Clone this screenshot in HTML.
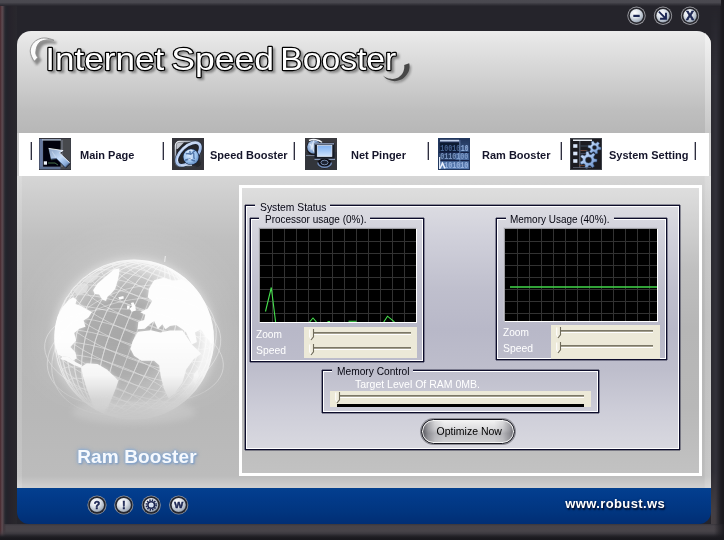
<!DOCTYPE html>
<html>
<head>
<meta charset="utf-8">
<title>Internet Speed Booster</title>
<style>
*{box-sizing:border-box;margin:0;padding:0}
html,body{width:724px;height:540px;overflow:hidden}
body{position:relative;font-family:"Liberation Sans",sans-serif;background:#25242b}
.abs{position:absolute}
i.ln{position:absolute;display:block}
#frame{left:0;top:0;width:724px;height:540px;background:#25242b}
#frameT{left:0;top:0;width:721px;height:6px;background:linear-gradient(to bottom,#4b4a51 0,#49484f 2.5px,#39383f 4px,#26252c 6px)}
#frameE{left:720px;top:0;width:4px;height:540px;background:linear-gradient(to right,#222127 0,#1b1a1f 2px,#19181d 4px)}
#frameL{left:0;top:0;width:17px;height:540px;background:linear-gradient(to right,#46262c 0,#54393f 1px,#5c4b51 2.2px,#463c42 3.5px,#272930 5px,#22232a 7px,#26232b 10px,#28262c 14px,#29282e 17px)}
#frameR{left:711px;top:6px;width:9px;height:534px;background:linear-gradient(to right,#2a2930 0,#302f36 3px,#32313a 5px,#2a2930 7px,#222127 9px);-webkit-mask-image:linear-gradient(to bottom,transparent 0,#000 70px);mask-image:linear-gradient(to bottom,transparent 0,#000 70px)}
#frameB{left:0;top:524px;width:724px;height:16px;background:linear-gradient(to right,rgba(27,26,31,0) 0,rgba(27,26,31,0) 714px,rgba(27,26,31,.55) 719px,rgba(25,24,29,.95) 724px),linear-gradient(to bottom,#39363c 0,#474349 2px,#484449 7px,#3c393f 9.5px,#252429 12px,#1b1a1f 14px,#19181d 16px)}
#frameL2{left:0;top:524px;width:6px;height:13px;background:linear-gradient(to right,#46262c 0,#54393f 1px,#5c4b51 2.2px,#463c42 3.5px,rgba(60,52,58,.5) 5px,rgba(60,52,58,0) 6px);-webkit-mask-image:linear-gradient(to bottom,#000 0,#000 6px,transparent 13px);mask-image:linear-gradient(to bottom,#000 0,#000 6px,transparent 13px)}
#frameBR{left:711px;top:470px;width:9px;height:54px;background:linear-gradient(to right,rgba(74,68,72,.85) 0,rgba(72,66,70,.8) 4px,rgba(50,47,52,.5) 7px,rgba(34,33,39,0) 9px);-webkit-mask-image:linear-gradient(to bottom,transparent 0,#000 42px);mask-image:linear-gradient(to bottom,transparent 0,#000 42px)}
#panel{left:17px;top:31px;width:694px;height:493px;border-radius:14px 14px 12px 12px;overflow:hidden;background:transparent}
#header{left:0;top:0;width:694px;height:102px;background:linear-gradient(to bottom,#ececec 0,#e4e4e4 12px,#d2d2d2 45px,#bebebe 80px,#b7b7b7 102px)}
#hdrR{left:688px;top:0;width:6px;height:102px;background:linear-gradient(to bottom,#f4f4f4 0,#dedede 50px,#c6c6c6 102px)}
#nav{left:0;top:102px;width:694px;height:43px;background:linear-gradient(to right,#cfcfcf 0,#cfcfcf 1.5px,#fff 2px,#fff 692px,#d4d4d4 692px)}
#content{left:0;top:145px;width:694px;height:312px;background:linear-gradient(to right,rgba(255,255,255,.16) 0,rgba(255,255,255,.13) 4.500px,rgba(255,255,255,0) 5.500px,rgba(255,255,255,0) 687px,rgba(255,255,255,.14) 688.500px,rgba(255,255,255,.2) 694px),linear-gradient(to bottom,#d6d6d6 0,#cdcdcd 22px,#bfbfbf 65px,#b6b6b6 140px,#b8b8b8 240px,#bcbcbc 300px,#cfcfcf 311px)}
#footer{left:0;top:457px;width:694px;height:36px;background:linear-gradient(to bottom,#03408f 0,#023b8b 8px,#01357f 24px,#012e74 36px)}
.sep{top:9px;width:2px;height:18px;background:linear-gradient(to right,#b4b4bc 0,#b4b4bc .6px,#2e2e3e .6px,#2e2e3e 1.8px,#d8d8dc 1.8px)}
.ico{top:5px;width:32px;height:32px}
.nt{top:16px;font-size:11px;font-weight:bold;color:#15152a;white-space:nowrap;line-height:13px}
#wbox{border:3px solid #fff;background:linear-gradient(to bottom,#dedede 0,#d3d3d3 30px,#c0c0c0 80px,#b6b6b6 140px,#b8b8b8 220px,#c2c2c2 285px)}
.lg{font-size:11px;line-height:12px;color:#050510;white-space:nowrap}
.graph{background-color:#000;border:1px solid;border-color:#9c9ca2 #fff #fff #9c9ca2;box-shadow:-1px -1px 0 rgba(200,200,208,.7)}
.wl{color:#fff;font-size:11px;line-height:12px;white-space:nowrap}
.beige{background:#ece9d8}
.trk{height:3px;background:linear-gradient(to bottom,#7b7766 0,#7b7766 1px,#a39f8e 1px,#a39f8e 2px,#fff 2px)}
.thumb{width:6px;height:12px}
#btn{border-radius:13px;border:1px solid #17171f;font-size:11px;line-height:23px;text-align:center;color:#000;
 box-shadow:0 0 0 1px #8e8e96,inset 0 0 0 1px #f4f4f4;
 background:linear-gradient(to right,rgba(50,50,58,.8) 0,rgba(90,90,98,.5) 6px,rgba(130,130,138,.22) 13px,rgba(255,255,255,0) 22px,rgba(255,255,255,0) 72px,rgba(130,130,138,.22) 81px,rgba(90,90,98,.5) 88px,rgba(50,50,58,.8) 94px),
 linear-gradient(to bottom,#f4f4f4 0,#dcdcde 40%,#c0c0c4 58%,#d2d2d4 100%)}
#btn span{display:inline-block;transform:scaleX(.955);position:relative;left:1px}
.lg,.wl{transform-origin:0 0}
#lgS{transform:scaleX(.938)}
#lgP{transform:scaleX(.907)}
#lgM{transform:scaleX(.905)}
#lgC{transform:scaleX(.927)}
#tC{transform:scaleX(.955)}
#zP,#zM{transform:scaleX(.92)}
#sP,#sM{transform:scaleX(.945)}
#panel{will-change:transform}
#url{font-size:13px;font-weight:bold;color:#fff;line-height:15px;letter-spacing:.38px;white-space:nowrap;text-shadow:1px 1.5px 1.5px #03102e,0 0 2px rgba(3,16,46,.6)}
#ramlbl{font-size:19px;font-weight:bold;color:#f6f9fd;line-height:22px;white-space:nowrap;letter-spacing:.12px;text-shadow:0 0 2px #8fb0d6,0 0 3px #8fb0d6,0 0 5px rgba(125,160,205,.9),1px 1px 2px rgba(105,135,180,.9)}
</style>
</head>
<body>
<div id="frame" class="abs"></div>
<div id="frameL" class="abs"></div>
<div id="frameR" class="abs"></div>
<div id="frameE" class="abs"></div>
<div id="frameB" class="abs"></div>
<div id="frameT" class="abs"></div>
<div id="frameBR" class="abs"></div>
<div id="frameL2" class="abs"></div>
<svg class="abs" id="winbtns" style="left:620px;top:0;will-change:transform" width="90" height="31" viewBox="620 0 90 31"><defs><radialGradient id="wg" cx=".38" cy=".3" r=".8"><stop offset="0" stop-color="#fdfdfe"/><stop offset=".42" stop-color="#e0e5ec"/><stop offset=".8" stop-color="#a9b3c0"/><stop offset="1" stop-color="#6f7886"/></radialGradient></defs><g transform="translate(636.5,15.7)"><circle r="9.2" fill="#9a9aa0"/><circle r="8.3" fill="#26262c"/><circle r="6.7" fill="url(#wg)"/><rect x="-3.2" y="-.9" width="6.4" height="2.2" fill="#1b2552"/></g><g transform="translate(663,15.7)"><circle r="9.2" fill="#9a9aa0"/><circle r="8.3" fill="#26262c"/><circle r="6.7" fill="url(#wg)"/><path d="M-3.4 -3.4L1.6 1.6M3 -2V3H-2" stroke="#1b2552" stroke-width="1.9" fill="none" stroke-linecap="square"/></g><g transform="translate(690,15.7)"><circle r="9.2" fill="#9a9aa0"/><circle r="8.3" fill="#26262c"/><circle r="6.7" fill="url(#wg)"/><text x="0" y="4.3" text-anchor="middle" font-family="Liberation Sans, sans-serif" font-weight="bold" font-size="12" fill="#1b2552" stroke="#1b2552" stroke-width=".6">X</text></g></svg>
<div id="panel" class="abs">
<div id="header" class="abs"></div><div id="hdrR" class="abs"></div>
<svg class="abs" id="title" style="left:0;top:0" width="694" height="102" viewBox="17 31 694 102">
<defs>
<filter id="tsh" x="-5%" y="-30%" width="110%" height="170%"><feGaussianBlur stdDeviation="1.1"/></filter>
</defs>
<g font-family="Liberation Sans, sans-serif" font-size="32">
 <g filter="url(#tsh)" fill="#666" stroke="#666" stroke-width="2.2" opacity=".7" transform="translate(2.4,2.6)">
  <text x="45.3" y="69.6" textLength="119" lengthAdjust="spacingAndGlyphs">Internet</text>
  <text x="171.2" y="69.6" textLength="102.8" lengthAdjust="spacingAndGlyphs">Speed</text>
  <text x="280.3" y="69.6" textLength="116" lengthAdjust="spacingAndGlyphs">Booster</text>
  <path d="M34.5 61.3C31 57 30 52 30.3 50C31 45 34 41 38.7 39.2C42 37.6 47 37.2 54 40.4C50 39.2 45 39.6 40.3 41.7C37.5 44 36 47.5 35.75 53.3C36 55 36.8 56.5 37.8 57.5Z"/>
 </g>
 <g fill="#000" stroke="#000" stroke-width="2.3" stroke-linejoin="round">
  <text x="45.3" y="69.6" textLength="119" lengthAdjust="spacingAndGlyphs">Internet</text>
  <text x="171.2" y="69.6" textLength="102.8" lengthAdjust="spacingAndGlyphs">Speed</text>
  <text x="280.3" y="69.6" textLength="116" lengthAdjust="spacingAndGlyphs">Booster</text>
 </g>
 <g fill="#fff">
  <text x="45.3" y="69.6" textLength="119" lengthAdjust="spacingAndGlyphs">Internet</text>
  <text x="171.2" y="69.6" textLength="102.8" lengthAdjust="spacingAndGlyphs">Speed</text>
  <text x="280.3" y="69.6" textLength="116" lengthAdjust="spacingAndGlyphs">Booster</text>
 </g>
</g>
<!-- swoosh top-left -->
<path d="M34.5 61.3C31 57 30 52 30.3 50C31 45 34 41 38.7 39.2C42 37.6 47 37.2 54 40.4C50 39.2 45 39.6 40.3 41.7C37.5 44 36 47.5 35.75 53.3C36 55 36.8 56.5 37.8 57.5Z" fill="#fbfbfb" stroke="#8c8c8c" stroke-width=".9" stroke-linejoin="round"/>
<!-- swoosh bottom-right -->
<g>
 <path filter="url(#tsh)" transform="translate(1.6,1.8)" opacity=".7" fill="#777" d="M382.9 75.4C385 78 387.5 79.6 389.2 80C392 81.2 395 81.4 397.5 80.8C401 80 403.5 78.5 405 76.7C407.5 74 409 71.5 409.2 69.2C409.8 67 409.6 65 409.2 63.3L404.2 65C404.5 67.5 404.2 69.5 403.3 71.7C402.3 74 400.5 76 398.3 77.5C396 78.8 393.5 79.2 390.8 78.75C388 78.4 385 77.2 382.9 75.4Z"/>
 <path fill="#474747" d="M382.9 75.4C385 78 387.5 79.6 389.2 80C392 81.2 395 81.4 397.5 80.8C401 80 403.5 78.5 405 76.7C407.5 74 409 71.5 409.2 69.2C409.8 67 409.6 65 409.2 63.3L404.2 65C404.5 67.5 404.2 69.5 403.3 71.7C402.3 74 400.5 76 398.3 77.5C396 78.8 393.5 79.2 390.8 78.75C388 78.4 385 77.2 382.9 75.4Z"/>
</g>
</svg>

<div id="nav" class="abs">
<div class="abs sep" style="left:13px"></div>
<div class="abs sep" style="left:145px"></div>
<div class="abs sep" style="left:276px"></div>
<div class="abs sep" style="left:410px"></div>
<div class="abs sep" style="left:543px"></div>
<div class="abs sep" style="left:677px"></div>
<div class="abs ico" style="left:22px"><svg width="32" height="32" viewBox="0 0 32 32" style="display:block"><defs><linearGradient id="c1" x1="0" y1="0" x2="1" y2="1"><stop offset="0" stop-color="#8aa0c0"/><stop offset=".28" stop-color="#a4bddc"/><stop offset=".52" stop-color="#c6defb"/><stop offset=".78" stop-color="#90b1dd"/><stop offset="1" stop-color="#506c96"/></linearGradient><filter id="ib1" x="-10%" y="-10%" width="120%" height="120%"><feGaussianBlur stdDeviation=".5"/></filter><clipPath id="cpib1"><rect width="32" height="32"/></clipPath></defs><g clip-path="url(#cpib1)"><g filter="url(#ib1)">
<rect width="32" height="32" fill="#3e4048"/>
<rect x="0" y="0" width="32" height="32" fill="none" stroke="#2a2c34" stroke-width="1"/>
<rect x="21.500" y="1" width="10" height="30" fill="#47484e"/><rect x="21.500" y="2" width="2.500" height="27" fill="#62666f"/>
<rect x="0.5" y="1" width="3.400" height="30" fill="#6678a0"/>
<rect x="4.200" y="2.500" width="17.300" height="26.300" fill="#05060a"/>
<rect x="3" y="1.2" width="19" height="1.3" fill="#aab8cf"/>
<rect x="1" y="28.700" width="20.500" height="2.600" fill="#5d6f92"/>
<rect x="4.8" y="23.3" width="3.2" height="3.4" fill="#eef3fb"/>
<path d="M9 25h7l3 2" stroke="#3f6a4a" stroke-width="1" fill="none"/>
<path d="M9.600 11.400L24.600 13.600L21.200 15.800L31.500 25.800L26.800 30.600L17.800 21.600L12.200 22.300Z" fill="#1c2430"/>
<path d="M9.600 10.400L24.100 12.600L20.400 14.800L30.700 24.800L26.300 29.300L17.400 20.400L11.900 21.100Z" fill="url(#c1)"/>
<path d="M9.600 10.400L24.100 12.600L20.400 14.800L30.700 24.800" fill="none" stroke="#f4f8ff" stroke-width=".9"/>
<path d="M11.900 21.100L17.400 20.400L26.300 29.300L30.700 24.800" fill="none" stroke="#4d6488" stroke-width=".9" opacity=".9"/>
<path d="M13 13.500L17 19.500" stroke="#dfe9f6" stroke-width="1.100" opacity=".45"/>
</g></g></svg></div>
<div class="abs ico" style="left:155px"><svg width="32" height="32" viewBox="0 0 32 32" style="display:block"><defs><linearGradient id="r2" x1="0" y1="0" x2="1" y2="1"><stop offset="0" stop-color="#f4f6fa"/><stop offset=".4" stop-color="#7b8594"/><stop offset="1" stop-color="#1e1f24"/></linearGradient>
<radialGradient id="g2" cx=".42" cy=".38" r=".7"><stop offset="0" stop-color="#d9e9fc"/><stop offset=".6" stop-color="#9dc4f0"/><stop offset="1" stop-color="#5580b8"/></radialGradient>
<linearGradient id="e2" x1="0" y1="1" x2="1" y2="0"><stop offset="0" stop-color="#b9cdee"/><stop offset=".5" stop-color="#9bb9e8"/><stop offset="1" stop-color="#dbe6f8"/></linearGradient><filter id="ib2" x="-10%" y="-10%" width="120%" height="120%"><feGaussianBlur stdDeviation=".5"/></filter><clipPath id="cpib2"><rect width="32" height="32"/></clipPath></defs><g clip-path="url(#cpib2)"><g filter="url(#ib2)">
<rect width="32" height="32" fill="#35363b"/>
<rect x="3.500" y="3.500" width="25" height="25" rx="4" fill="#26272c" stroke="url(#r2)" stroke-width="1.500"/>
<path d="M4.500 11V7.500a3 3 0 0 1 3-3H12L5.500 11Z" fill="#e8eef8" opacity=".8"/>
<ellipse cx="16.500" cy="16" rx="14.500" ry="7.600" transform="rotate(-43 16.500 16)" fill="none" stroke="#10192c" stroke-width="4.400" opacity=".55"/>
<ellipse cx="16.500" cy="16" rx="14.500" ry="7.600" transform="rotate(-43 16.500 16)" fill="none" stroke="url(#e2)" stroke-width="2.900"/>
<circle cx="19" cy="18.800" r="8.300" fill="#1a2a48"/>
<circle cx="19" cy="18.800" r="7.600" fill="url(#g2)"/>
<path d="M14 16c2-1.500 3 .5 5 0s2-3 4-3M13 22c2 .5 3-1.500 5-1s3 2.500 5 1.500M18 12c-1 2 1 3 .5 5M21.500 15c1 2-.5 4 1 6" stroke="#3f659c" stroke-width="1.400" fill="none" opacity=".85"/>
<path d="M15 14.500c1.500-2 4-2.500 5.500-2M16 21c1.500.8 3 .2 4-1" stroke="#eef5ff" stroke-width="1.200" fill="none" opacity=".8"/>
<path d="M6.200 24.500C3.500 20.500 8 12 15 7.500" stroke="#e9f0fb" stroke-width="1" fill="none" opacity=".75"/>
<path d="M9 27.300h11" stroke="#cfdcf0" stroke-width="1"/>
</g></g></svg></div>
<div class="abs ico" style="left:288px"><svg width="32" height="32" viewBox="0 0 32 32" style="display:block"><defs><radialGradient id="g3" cx=".4" cy=".4" r=".7"><stop offset="0" stop-color="#cfe0f6"/><stop offset=".7" stop-color="#7ea0d0"/><stop offset="1" stop-color="#3e5a88"/></radialGradient>
<linearGradient id="s3" x1="0" y1="0" x2="0" y2="1"><stop offset="0" stop-color="#7fb1f2"/><stop offset=".5" stop-color="#a3c8f7"/><stop offset="1" stop-color="#cfe2fb"/></linearGradient><filter id="ib3" x="-10%" y="-10%" width="120%" height="120%"><feGaussianBlur stdDeviation=".5"/></filter><clipPath id="cpib3"><rect width="32" height="32"/></clipPath></defs><g clip-path="url(#cpib3)"><g filter="url(#ib3)">
<rect width="32" height="32" fill="#3a3b40"/>
<rect x="0" y="14" width="32" height="18" fill="#33343a"/>
<circle cx="9.5" cy="9.500" r="8.200" fill="#16181d"/>
<circle cx="9" cy="9" r="6.800" fill="url(#g3)"/>
<path d="M4.500 6c2 1 2.500 3 1.500 5.500M9 2.500c-2 3-2 8 .5 12" stroke="#e9f1fb" stroke-width="1.200" fill="none" opacity=".8"/>
<path d="M4 2.500C8 .8 14 1.500 17 4.500" stroke="#f2f5fa" stroke-width="1.500" fill="none"/>
<rect x="9.500" y="4.800" width="20" height="16.500" rx="1.200" fill="#151a26"/>
<rect x="10" y="5" width="19" height="1.600" fill="#7f8da8"/>
<rect x="12.300" y="7.300" width="14.600" height="11.200" fill="url(#s3)"/>
<rect x="12.300" y="7.300" width="14.600" height="11.200" fill="none" stroke="#e6effc" stroke-width=".7"/>
<path d="M9.500 21.300h20.500" stroke="#9fb4d8" stroke-width="1"/>
<ellipse cx="19.500" cy="25.500" rx="7.200" ry="5" fill="#0c0e13"/>
<path d="M12.800 24.500a6.800 4.800 0 0 0 13.600 0" fill="none" stroke="#6f89b5" stroke-width="1.500"/>
<ellipse cx="19.500" cy="24.500" rx="3.600" ry="2.300" fill="#1b2130" stroke="#8ea6cc" stroke-width=".8"/>
<path d="M1 17.500h8.500" stroke="#8c99b3" stroke-width="1" opacity=".7"/>
</g></g></svg></div>
<div class="abs ico" style="left:421px"><svg width="32" height="32" viewBox="0 0 32 32" style="display:block"><defs><linearGradient id="b4" x1="0" y1="0" x2="0" y2="1"><stop offset="0" stop-color="#22355a"/><stop offset=".45" stop-color="#385585"/><stop offset="1" stop-color="#5f82b8"/></linearGradient><filter id="ib4" x="-10%" y="-10%" width="120%" height="120%"><feGaussianBlur stdDeviation=".5"/></filter><clipPath id="cpib4"><rect width="32" height="32"/></clipPath></defs><g clip-path="url(#cpib4)"><g filter="url(#ib4)">
<rect width="32" height="32" fill="#4c6893"/>
<rect x="1" y="1" width="30" height="30" fill="url(#b4)"/>
<rect x="1.500" y="4.500" width="20" height="10" fill="#081226" opacity=".8"/>
<rect x="1.500" y="14.500" width="16" height="8" fill="#0c1a34" opacity=".5"/>
<text x="2.200" y="12.8" font-family="Liberation Mono, monospace" font-weight="bold" font-size="8.400" textLength="28" lengthAdjust="spacingAndGlyphs" fill="#5a7aae" opacity="0.75">1001011</text><text x="23" y="12.800" font-family="Liberation Mono, monospace" font-weight="bold" font-size="8.400" textLength="7.500" lengthAdjust="spacingAndGlyphs" fill="#9cb8e2" opacity=".85">10</text><text x="2.200" y="21.4" font-family="Liberation Mono, monospace" font-weight="bold" font-size="8.400" textLength="28" lengthAdjust="spacingAndGlyphs" fill="#8eabd8" opacity="0.8">0110100</text><text x="2.200" y="30" font-family="Liberation Mono, monospace" font-weight="bold" font-size="8.400" textLength="28" lengthAdjust="spacingAndGlyphs" fill="#a3bde6" opacity="0.85">A101010</text>
<path d="M1 14.300h30M1 22.600h30" stroke="#132446" stroke-width="1.200"/>
<path d="M21.800 2v29" stroke="#86a5d2" stroke-width=".8" opacity=".8"/>
<rect x="2" y="1.800" width="19" height="1.700" fill="#c2d1ea"/>
<rect x="0.500" y="0.500" width="31" height="31" fill="none" stroke="#22385e" stroke-width="1.200"/>
<path d="M1.600 31V19" stroke="#dfe9f8" stroke-width="1.200"/>
<path d="M2 30.500l2.600-5.500 2.400 5.500" stroke="#eef3fc" stroke-width="1.300" fill="none"/>
</g></g></svg></div>
<div class="abs ico" style="left:553px"><svg width="32" height="32" viewBox="0 0 32 32" style="display:block"><defs><linearGradient id="g5" x1="0" y1="0" x2="1" y2="1"><stop offset="0" stop-color="#d6e5fb"/><stop offset=".5" stop-color="#9dbdea"/><stop offset="1" stop-color="#5d82bb"/></linearGradient><filter id="ib5" x="-10%" y="-10%" width="120%" height="120%"><feGaussianBlur stdDeviation=".5"/></filter><clipPath id="cpib5"><rect width="32" height="32"/></clipPath></defs><g clip-path="url(#cpib5)"><g filter="url(#ib5)">
<rect width="32" height="32" fill="#1b1c20"/>
<rect x="0.500" y="0.500" width="31" height="31" fill="none" stroke="#3d3f46" stroke-width="1"/>
<rect x="3" y="1.500" width="19" height="1.500" fill="#e8edf5"/>
<path d="M9.800 3v27" stroke="#8d96a8" stroke-width=".7"/>
<rect x="3.200" y="6.200" width="4.200" height="3.600" fill="#d9e6fa"/>
<rect x="3.200" y="13.700" width="4.200" height="3.600" fill="#d9e6fa"/>
<rect x="3.200" y="21.200" width="4.200" height="3.600" fill="#d9e6fa"/>
<path d="M10.500 8h9M10.500 12.500h7M10.500 15.500h6" stroke="#47506a" stroke-width=".8"/>
<path d="M10.500 12.500h6M9 27.500h6" stroke="#8a4a2c" stroke-width=".8" opacity=".8"/>
<path d="M31.10 9.55L30.72 11.71L28.30 11.73L27.35 12.85L27.76 15.24L25.69 15.99L24.47 13.90L23.02 13.65L21.16 15.19L19.47 13.78L20.67 11.67L20.17 10.29L17.90 9.45L18.28 7.29L20.70 7.27L21.65 6.15L21.24 3.76L23.31 3.01L24.53 5.10L25.98 5.35L27.84 3.81L29.53 5.22L28.33 7.33L28.83 8.71ZM22.40 9.50 a2.10 2.10 0 1 0 4.20 0 a2.10 2.10 0 1 0 -4.20 0Z" fill="url(#g5)" fill-rule="evenodd" stroke="#35507c" stroke-width=".5"/>
<path d="M27.08 21.37L26.90 23.82L23.90 24.12L23.07 25.57L24.34 28.31L22.32 29.71L20.20 27.54L18.56 27.80L17.21 30.50L14.85 29.79L15.23 26.79L14.01 25.67L11.05 26.29L10.14 24.01L12.72 22.43L12.83 20.77L10.50 18.85L11.72 16.71L14.56 17.74L15.93 16.80L15.97 13.78L18.41 13.40L19.37 16.27L20.96 16.75L23.35 14.90L25.16 16.56L23.53 19.11L24.14 20.65ZM15.50 22.00 a3.00 3.00 0 1 0 6.00 0 a3.00 3.00 0 1 0 -6.00 0Z" fill="url(#g5)" fill-rule="evenodd" stroke="#35507c" stroke-width=".5"/>
<path d="M3 29.500h18" stroke="#5b6070" stroke-width=".8"/>
</g></g></svg></div>
<div class="abs nt" style="left:63px">Main Page</div>
<div class="abs nt" style="left:193px">Speed Booster</div>
<div class="abs nt" style="left:334px">Net Pinger</div>
<div class="abs nt" style="left:465px">Ram Booster</div>
<div class="abs nt" style="left:592px">System Setting</div>
</div>
<div id="content" class="abs">
<svg class="abs" id="globe" style="left:0;top:0" width="221" height="312" viewBox="17 176 221 312"><defs>
<radialGradient id="gHalo" cx="134" cy="336" r="128" gradientUnits="userSpaceOnUse">
 <stop offset="0" stop-color="#fff" stop-opacity=".22"/><stop offset=".6" stop-color="#fff" stop-opacity=".17"/><stop offset=".7" stop-color="#fff" stop-opacity=".08"/><stop offset=".85" stop-color="#fff" stop-opacity=".025"/><stop offset="1" stop-color="#fff" stop-opacity="0"/>
</radialGradient>
<radialGradient id="gSea" cx="122" cy="338" r="84" gradientUnits="userSpaceOnUse">
 <stop offset="0" stop-color="#a7a7a7"/><stop offset=".45" stop-color="#adadad"/><stop offset=".75" stop-color="#c6c6c6"/><stop offset=".92" stop-color="#e6e6e6"/><stop offset="1" stop-color="#f6f6f6"/>
</radialGradient>
<linearGradient id="gFade" x1="0" y1="340" x2="0" y2="424" gradientUnits="userSpaceOnUse">
 <stop offset="0" stop-color="#fff"/><stop offset=".42" stop-color="#fff" stop-opacity=".9"/><stop offset=".66" stop-color="#fff" stop-opacity=".5"/><stop offset=".84" stop-color="#fff" stop-opacity=".17"/><stop offset="1" stop-color="#fff" stop-opacity="0"/>
</linearGradient>
<mask id="mFade" maskUnits="userSpaceOnUse" x="17" y="176" width="222" height="312"><rect x="17" y="176" width="221" height="312" fill="url(#gFade)"/></mask>
<clipPath id="cGlobe"><circle cx="134" cy="339.5" r="80"/></clipPath>
<filter id="bl1" x="-10%" y="-10%" width="120%" height="120%"><feGaussianBlur stdDeviation=".7"/></filter>
<filter id="bl2" x="-20%" y="-20%" width="140%" height="140%"><feGaussianBlur stdDeviation="2"/></filter>
<filter id="bl3" x="-20%" y="-20%" width="140%" height="140%"><feGaussianBlur stdDeviation="3"/></filter>
</defs><g mask="url(#mFade)"><circle cx="134" cy="336" r="128" fill="url(#gHalo)"/><circle cx="134" cy="339.5" r="82" fill="#fff" opacity=".3" filter="url(#bl3)"/><circle cx="134" cy="339.5" r="80" fill="url(#gSea)"/><g clip-path="url(#cGlobe)"><g fill="none" stroke="#fff" stroke-width=".65" opacity=".6"><ellipse cx="134" cy="339.5" rx="79.0151" ry="80" transform="rotate(21 134 339.5)"/><ellipse cx="134" cy="339.5" rx="76.0845" ry="80" transform="rotate(21 134 339.5)"/><ellipse cx="134" cy="339.5" rx="71.2805" ry="80" transform="rotate(21 134 339.5)"/><ellipse cx="134" cy="339.5" rx="64.7214" ry="80" transform="rotate(21 134 339.5)"/><ellipse cx="134" cy="339.5" rx="56.5685" ry="80" transform="rotate(21 134 339.5)"/><ellipse cx="134" cy="339.5" rx="47.0228" ry="80" transform="rotate(21 134 339.5)"/><ellipse cx="134" cy="339.5" rx="36.3192" ry="80" transform="rotate(21 134 339.5)"/><ellipse cx="134" cy="339.5" rx="24.7214" ry="80" transform="rotate(21 134 339.5)"/><ellipse cx="134" cy="339.5" rx="12.5148" ry="80" transform="rotate(21 134 339.5)"/><line x1="134" y1="259.5" x2="134" y2="419.5" transform="rotate(21 134 339.5)"/><ellipse cx="134" cy="339.5" rx="12.5148" ry="80" transform="rotate(21 134 339.5)"/><ellipse cx="134" cy="339.5" rx="24.7214" ry="80" transform="rotate(21 134 339.5)"/><ellipse cx="134" cy="339.5" rx="36.3192" ry="80" transform="rotate(21 134 339.5)"/><ellipse cx="134" cy="339.5" rx="47.0228" ry="80" transform="rotate(21 134 339.5)"/><ellipse cx="134" cy="339.5" rx="56.5685" ry="80" transform="rotate(21 134 339.5)"/><ellipse cx="134" cy="339.5" rx="64.7214" ry="80" transform="rotate(21 134 339.5)"/><ellipse cx="134" cy="339.5" rx="71.2805" ry="80" transform="rotate(21 134 339.5)"/><ellipse cx="134" cy="339.5" rx="76.0845" ry="80" transform="rotate(21 134 339.5)"/><ellipse cx="134" cy="339.5" rx="79.0151" ry="80" transform="rotate(21 134 339.5)"/><ellipse cx="107.544" cy="408.421" rx="24.7214" ry="5.98064" transform="rotate(21 107.544 408.421)"/><ellipse cx="109.214" cy="404.069" rx="36.3192" ry="8.78642" transform="rotate(21 109.214 404.069)"/><ellipse cx="111.495" cy="398.128" rx="47.0228" ry="11.3758" transform="rotate(21 111.495 398.128)"/><ellipse cx="114.33" cy="390.743" rx="56.5685" ry="13.6852" transform="rotate(21 114.33 390.743)"/><ellipse cx="117.649" cy="382.096" rx="64.7214" ry="15.6575" transform="rotate(21 117.649 382.096)"/><ellipse cx="121.371" cy="372.4" rx="71.2805" ry="17.2443" transform="rotate(21 121.371 372.4)"/><ellipse cx="125.404" cy="361.894" rx="76.0845" ry="18.4065" transform="rotate(21 125.404 361.894)"/><ellipse cx="129.648" cy="350.836" rx="79.0151" ry="19.1155" transform="rotate(21 129.648 350.836)"/><ellipse cx="134" cy="339.5" rx="80" ry="19.3538" transform="rotate(21 134 339.5)"/><ellipse cx="138.352" cy="328.164" rx="79.0151" ry="19.1155" transform="rotate(21 138.352 328.164)"/><ellipse cx="142.596" cy="317.106" rx="76.0845" ry="18.4065" transform="rotate(21 142.596 317.106)"/><ellipse cx="146.629" cy="306.6" rx="71.2805" ry="17.2443" transform="rotate(21 146.629 306.6)"/><ellipse cx="150.351" cy="296.904" rx="64.7214" ry="15.6575" transform="rotate(21 150.351 296.904)"/><ellipse cx="153.67" cy="288.257" rx="56.5685" ry="13.6852" transform="rotate(21 153.67 288.257)"/><ellipse cx="156.505" cy="280.872" rx="47.0228" ry="11.3758" transform="rotate(21 156.505 280.872)"/><ellipse cx="158.786" cy="274.931" rx="36.3192" ry="8.78642" transform="rotate(21 158.786 274.931)"/><ellipse cx="160.456" cy="270.579" rx="24.7214" ry="5.98064" transform="rotate(21 160.456 270.579)"/><ellipse cx="161.475" cy="267.924" rx="12.5148" ry="3.02759" transform="rotate(21 161.475 267.924)"/></g><g fill="#fff" opacity=".45" filter="url(#bl2)"><path d="M93.1 290.3L97.5 283.4L105.7 276.4L113.9 269.5L119.5 268.3L118.9 275.2L117.3 282.1L115.1 289.0L111.3 293.4L107.6 296.6L106.0 301.0L102.2 299.4L99.1 294.4L94.7 294.1Z"/><path d="M56.6 317.7L62.9 306.6L68.5 300.3L72.9 297.2L76.7 299.7L75.5 304.1L81.1 306.0L87.4 309.8L91.8 312.3L88.7 317.3L83.6 320.5L85.5 326.8L79.2 328.7L74.2 333.1L76.1 340.6L70.4 346.9L75.5 352.6L76.7 358.2L72.9 360.8L68.5 357.0L62.3 356.4L57.8 354.5L54.7 344.4L54.4 330.2Z"/><path d="M81.1 367.1L86.8 363.3L97.5 363.9L106.9 369.6L118.3 380.3L115.7 388.5L112.0 397.3L108.2 406.1L103.8 413.6L97.5 413.6L91.8 402.3L86.8 389.1L83.0 376.5Z"/><path d="M137.5 329.3L138.4 321.7L144.1 319.9L145.3 314.8L140.3 312.3L147.8 308.5L152.2 301.0L147.8 297.2L149.1 288.4L154.1 280.2L163.6 277.7L173.0 280.8L182.5 279.6L191.9 284.6L200.7 295.9L208.3 311.7L213.3 330.6L212.0 344.4L205.7 336.2L200.7 329.3L195.0 332.4L196.9 341.9L191.9 344.4L186.2 332.4L182.5 329.3L176.2 324.9L169.9 326.1L165.5 329.3L162.3 324.3L157.9 329.3L154.1 321.1L149.7 324.3L144.7 328.7Z"/><path d="M132.7 341.3L137.8 331.8L151.0 330.2L160.4 332.4L169.9 330.6L182.5 330.6L191.9 344.4L201.3 353.8L193.8 358.9L186.2 369.6L182.5 382.2L174.9 393.2L168.6 398.5L163.9 388.5L160.7 375.9L159.2 365.2L154.1 360.8L141.5 360.8L134.0 355.7L130.5 349.1Z"/></g><g fill="#fdfdfd" filter="url(#bl1)"><path d="M93.1 290.3L97.5 283.4L105.7 276.4L113.9 269.5L119.5 268.3L118.9 275.2L117.3 282.1L115.1 289.0L111.3 293.4L107.6 296.6L106.0 301.0L102.2 299.4L99.1 294.4L94.7 294.1Z"/><path d="M56.6 317.7L62.9 306.6L68.5 300.3L72.9 297.2L76.7 299.7L75.5 304.1L81.1 306.0L87.4 309.8L91.8 312.3L88.7 317.3L83.6 320.5L85.5 326.8L79.2 328.7L74.2 333.1L76.1 340.6L70.4 346.9L75.5 352.6L76.7 358.2L72.9 360.8L68.5 357.0L62.3 356.4L57.8 354.5L54.7 344.4L54.4 330.2Z"/><path d="M62.3 356.4L68.5 357.0L75.5 362.0L81.8 365.2L81.1 367.7L74.2 365.2L66.0 360.8L60.4 358.9Z"/><path d="M81.1 367.1L86.8 363.3L97.5 363.9L106.9 369.6L118.3 380.3L115.7 388.5L112.0 397.3L108.2 406.1L103.8 413.6L97.5 413.6L91.8 402.3L86.8 389.1L83.0 376.5Z"/><path d="M137.5 329.3L138.4 321.7L144.1 319.9L145.3 314.8L140.3 312.3L147.8 308.5L152.2 301.0L147.8 297.2L149.1 288.4L154.1 280.2L163.6 277.7L173.0 280.8L182.5 279.6L191.9 284.6L200.7 295.9L208.3 311.7L213.3 330.6L212.0 344.4L205.7 336.2L200.7 329.3L195.0 332.4L196.9 341.9L191.9 344.4L186.2 332.4L182.5 329.3L176.2 324.9L169.9 326.1L165.5 329.3L162.3 324.3L157.9 329.3L154.1 321.1L149.7 324.3L144.7 328.7Z"/><path d="M132.7 341.3L137.8 331.8L151.0 330.2L160.4 332.4L169.9 330.6L182.5 330.6L191.9 344.4L201.3 353.8L193.8 358.9L186.2 369.6L182.5 382.2L174.9 393.2L168.6 398.5L163.9 388.5L160.7 375.9L159.2 365.2L154.1 360.8L141.5 360.8L134.0 355.7L130.5 349.1Z"/><path d="M131.5 311.7L135.9 310.4L135.3 306.0L133.4 302.2L130.8 302.9L132.1 306.6L129.6 308.5Z"/><path d="M127.1 309.2L129.6 308.5L129.6 305.4L127.1 305.4Z"/><path d="M118.3 297.2L123.3 295.9L123.9 298.5L119.5 299.7Z"/><path d="M193.8 374.6L197.6 369.6L198.8 375.9L195.7 383.4L193.2 380.9Z"/></g><g fill="#e4e4e4" opacity=".8" filter="url(#bl1)"><path d="M72.9 290.3L78.6 285.2L84.9 282.7L88.7 286.5L86.2 292.2L81.8 294.1L76.7 294.7Z"/><path d="M81.8 280.8L91.2 275.2L99.4 272.0L97.5 278.3L91.2 282.7L86.2 282.7Z"/></g></g><g fill="none" stroke="#fff" stroke-width=".8" opacity=".45"><ellipse cx="134" cy="352" rx="88" ry="52" transform="rotate(-12 134 352)"/><ellipse cx="134" cy="356" rx="90" ry="46" transform="rotate(8 134 356)"/><ellipse cx="134" cy="350" rx="86" ry="60" transform="rotate(-24 134 350)"/></g><path d="M164.6 262L165.4 256" stroke="#e6e6e6" stroke-width="1.2"/></g><ellipse cx="134" cy="412" rx="62" ry="12" fill="#fff" opacity=".16" filter="url(#bl3)"/></svg><div class="abs" id="ramlbl" style="left:60.2px;top:270px">Ram Booster</div>
<div id="wbox" class="abs" style="left:222px;top:9px;width:463px;height:291px">
<i class="ln" style="left:3px;top:17px;width:435px;height:245px;background:linear-gradient(to bottom,#dcdce2 0,#d1d1db 30px,#bfbfcd 85px,#b8b8c8 125px,#bebecc 165px,#cdcdd8 205px,#d9d9e0 245px)"></i><i class="ln" style="left:4px;top:18px;width:1px;height:243px;background:#fff"></i><i class="ln" style="left:436px;top:18px;width:1px;height:243px;background:#fff"></i><i class="ln" style="left:4px;top:260px;width:433px;height:1px;background:#fff"></i><i class="ln" style="left:4px;top:18px;width:9px;height:1px;background:#fff"></i><i class="ln" style="left:88px;top:18px;width:349px;height:1px;background:#fff"></i><i class="ln" style="left:2px;top:17px;width:1px;height:245px;background:rgba(13,13,43,.38)"></i><i class="ln" style="left:438px;top:17px;width:1px;height:245px;background:rgba(13,13,43,.38)"></i><i class="ln" style="left:3px;top:262px;width:435px;height:1px;background:rgba(13,13,43,.38)"></i><i class="ln" style="left:3px;top:16px;width:10px;height:1px;background:rgba(13,13,43,.38)"></i><i class="ln" style="left:88px;top:16px;width:350px;height:1px;background:rgba(13,13,43,.38)"></i><i class="ln" style="left:3px;top:17px;width:1px;height:245px;background:#0d0d2b"></i><i class="ln" style="left:437px;top:17px;width:1px;height:245px;background:#0d0d2b"></i><i class="ln" style="left:3px;top:261px;width:435px;height:1px;background:#0d0d2b"></i><i class="ln" style="left:3px;top:17px;width:10px;height:1px;background:#0d0d2b"></i><i class="ln" style="left:88px;top:17px;width:350px;height:1px;background:#0d0d2b"></i>
<div class="abs lg" id="lgS" style="left:18px;top:13px">System Status</div>
<i class="ln" style="left:9px;top:31px;width:1px;height:142px;background:#fff"></i><i class="ln" style="left:180px;top:31px;width:1px;height:142px;background:#fff"></i><i class="ln" style="left:9px;top:172px;width:172px;height:1px;background:#fff"></i><i class="ln" style="left:9px;top:31px;width:8px;height:1px;background:#fff"></i><i class="ln" style="left:128px;top:31px;width:53px;height:1px;background:#fff"></i><i class="ln" style="left:7px;top:30px;width:1px;height:144px;background:rgba(13,13,43,.38)"></i><i class="ln" style="left:182px;top:30px;width:1px;height:144px;background:rgba(13,13,43,.38)"></i><i class="ln" style="left:8px;top:174px;width:174px;height:1px;background:rgba(13,13,43,.38)"></i><i class="ln" style="left:8px;top:29px;width:9px;height:1px;background:rgba(13,13,43,.38)"></i><i class="ln" style="left:128px;top:29px;width:54px;height:1px;background:rgba(13,13,43,.38)"></i><i class="ln" style="left:8px;top:30px;width:1px;height:144px;background:#0d0d2b"></i><i class="ln" style="left:181px;top:30px;width:1px;height:144px;background:#0d0d2b"></i><i class="ln" style="left:8px;top:173px;width:174px;height:1px;background:#0d0d2b"></i><i class="ln" style="left:8px;top:30px;width:9px;height:1px;background:#0d0d2b"></i><i class="ln" style="left:128px;top:30px;width:54px;height:1px;background:#0d0d2b"></i>
<div class="abs lg" id="lgP" style="left:23px;top:25px">Processor usage (0%).</div>
<div class="abs graph" id="gP" style="left:17px;top:40px;width:158px;height:95px"><svg width="156" height="93" style="display:block"><path d="M12.5 0V93M24.5 0V93M36.5 0V93M48.5 0V93M60.5 0V93M72.5 0V93M84.5 0V93M96.5 0V93M108.5 0V93M120.5 0V93M132.5 0V93M144.5 0V93M0 12.5H156M0 24.5H156M0 36.5H156M0 48.5H156M0 60.5H156M0 72.5H156M0 84.5H156" stroke="#323232" stroke-width="1" fill="none" shape-rendering="crispEdges"/><path d="M5.5 82.5L11.3 58.5L15.6 93M49.5 93L53 89L56.5 93M67.5 92.5h2.5M88.5 92.3h8M123.7 93L127.5 87.2L134.5 93" stroke="#46e04e" stroke-width="1.1" fill="none"/></svg></div>
<div class="abs wl" id="zP" style="left:14px;top:140px">Zoom</div>
<div class="abs wl" id="sP" style="left:14px;top:156px">Speed</div>
<div class="abs beige" id="bP" style="left:62px;top:139px;width:113px;height:31px"></div>
<div class="abs trk" style="left:72px;top:144px;width:97px"></div>
<div class="abs thumb" style="left:67px;top:141px"><svg width="6" height="12" style="display:block"><path d="M1 .5H4V7.500L2.500 10 1 7.500Z" fill="#efecdd"/><path d="M.7 .5V8L2.300 10.300" stroke="#fff" stroke-width="1" fill="none"/><path d="M4.500 0V7.800L2 11" stroke="#6f6b5a" stroke-width="1.100" fill="none"/></svg></div>
<div class="abs trk" style="left:72px;top:159px;width:97px"></div>
<div class="abs thumb" style="left:67px;top:156px"><svg width="6" height="12" style="display:block"><path d="M1 .5H4V7.500L2.500 10 1 7.500Z" fill="#efecdd"/><path d="M.7 .5V8L2.300 10.300" stroke="#fff" stroke-width="1" fill="none"/><path d="M4.500 0V7.800L2 11" stroke="#6f6b5a" stroke-width="1.100" fill="none"/></svg></div>
<i class="ln" style="left:255px;top:31px;width:1px;height:140px;background:#fff"></i><i class="ln" style="left:423px;top:31px;width:1px;height:140px;background:#fff"></i><i class="ln" style="left:255px;top:170px;width:169px;height:1px;background:#fff"></i><i class="ln" style="left:255px;top:31px;width:9px;height:1px;background:#fff"></i><i class="ln" style="left:372px;top:31px;width:52px;height:1px;background:#fff"></i><i class="ln" style="left:253px;top:30px;width:1px;height:142px;background:rgba(13,13,43,.38)"></i><i class="ln" style="left:425px;top:30px;width:1px;height:142px;background:rgba(13,13,43,.38)"></i><i class="ln" style="left:254px;top:172px;width:171px;height:1px;background:rgba(13,13,43,.38)"></i><i class="ln" style="left:254px;top:29px;width:10px;height:1px;background:rgba(13,13,43,.38)"></i><i class="ln" style="left:372px;top:29px;width:53px;height:1px;background:rgba(13,13,43,.38)"></i><i class="ln" style="left:254px;top:30px;width:1px;height:142px;background:#0d0d2b"></i><i class="ln" style="left:424px;top:30px;width:1px;height:142px;background:#0d0d2b"></i><i class="ln" style="left:254px;top:171px;width:171px;height:1px;background:#0d0d2b"></i><i class="ln" style="left:254px;top:30px;width:10px;height:1px;background:#0d0d2b"></i><i class="ln" style="left:372px;top:30px;width:53px;height:1px;background:#0d0d2b"></i>
<div class="abs lg" id="lgM" style="left:268px;top:25px">Memory Usage (40%).</div>
<div class="abs graph" id="gM" style="left:262px;top:40px;width:154px;height:94px"><svg width="152" height="92" style="display:block"><path d="M12.5 0V92M24.5 0V92M36.5 0V92M48.5 0V92M60.5 0V92M72.5 0V92M84.5 0V92M96.5 0V92M108.5 0V92M120.5 0V92M132.5 0V92M144.5 0V92M0 12.5H152M0 24.5H152M0 36.5H152M0 48.5H152M0 60.5H152M0 72.5H152M0 84.5H152" stroke="#323232" stroke-width="1" fill="none" shape-rendering="crispEdges"/><path d="M5 58H152" stroke="#42d84a" stroke-width="1.4" fill="none"/></svg></div>
<div class="abs wl" id="zM" style="left:261px;top:138px">Zoom</div>
<div class="abs wl" id="sM" style="left:261px;top:154px">Speed</div>
<div class="abs beige" id="bM" style="left:309px;top:137px;width:109px;height:34px"></div>
<div class="abs trk" style="left:319px;top:142px;width:92px"></div>
<div class="abs thumb" style="left:314px;top:139px"><svg width="6" height="12" style="display:block"><path d="M1 .5H4V7.500L2.500 10 1 7.500Z" fill="#efecdd"/><path d="M.7 .5V8L2.300 10.300" stroke="#fff" stroke-width="1" fill="none"/><path d="M4.500 0V7.800L2 11" stroke="#6f6b5a" stroke-width="1.100" fill="none"/></svg></div>
<div class="abs trk" style="left:319px;top:157px;width:92px"></div>
<div class="abs thumb" style="left:314px;top:154px"><svg width="6" height="12" style="display:block"><path d="M1 .5H4V7.500L2.500 10 1 7.500Z" fill="#efecdd"/><path d="M.7 .5V8L2.300 10.300" stroke="#fff" stroke-width="1" fill="none"/><path d="M4.500 0V7.800L2 11" stroke="#6f6b5a" stroke-width="1.100" fill="none"/></svg></div>
<i class="ln" style="left:81px;top:183px;width:1px;height:41px;background:#fff"></i><i class="ln" style="left:355px;top:183px;width:1px;height:41px;background:#fff"></i><i class="ln" style="left:81px;top:223px;width:275px;height:1px;background:#fff"></i><i class="ln" style="left:81px;top:183px;width:9px;height:1px;background:#fff"></i><i class="ln" style="left:171px;top:183px;width:185px;height:1px;background:#fff"></i><i class="ln" style="left:79px;top:182px;width:1px;height:43px;background:rgba(13,13,43,.38)"></i><i class="ln" style="left:357px;top:182px;width:1px;height:43px;background:rgba(13,13,43,.38)"></i><i class="ln" style="left:80px;top:225px;width:277px;height:1px;background:rgba(13,13,43,.38)"></i><i class="ln" style="left:80px;top:181px;width:10px;height:1px;background:rgba(13,13,43,.38)"></i><i class="ln" style="left:171px;top:181px;width:186px;height:1px;background:rgba(13,13,43,.38)"></i><i class="ln" style="left:80px;top:182px;width:1px;height:43px;background:#0d0d2b"></i><i class="ln" style="left:356px;top:182px;width:1px;height:43px;background:#0d0d2b"></i><i class="ln" style="left:80px;top:224px;width:277px;height:1px;background:#0d0d2b"></i><i class="ln" style="left:80px;top:182px;width:10px;height:1px;background:#0d0d2b"></i><i class="ln" style="left:171px;top:182px;width:186px;height:1px;background:#0d0d2b"></i>
<div class="abs lg" id="lgC" style="left:95px;top:177px">Memory Control</div>
<div class="abs wl" id="tC" style="left:113px;top:190px;font-size:11px">Target Level Of RAM 0MB.</div>
<div class="abs beige" id="bC" style="left:88px;top:203px;width:261px;height:16px"></div>
<div class="abs trk" style="left:98px;top:207px;width:244px"></div>
<div class="abs thumb" style="left:93px;top:204px"><svg width="6" height="12" style="display:block"><path d="M1 .5H4V7.500L2.500 10 1 7.500Z" fill="#efecdd"/><path d="M.7 .5V8L2.300 10.300" stroke="#fff" stroke-width="1" fill="none"/><path d="M4.500 0V7.800L2 11" stroke="#6f6b5a" stroke-width="1.100" fill="none"/></svg></div>
<div class="abs" id="blk" style="left:95px;top:216px;width:247px;height:3px;background:#000"></div>
<div class="abs" id="btn" style="left:179px;top:231px;width:94px;height:25px"><span>Optimize Now</span></div>
</div>
</div>
<div id="footer" class="abs">
<svg class="abs" id="fbtns" style="left:61px;top:4px" width="120" height="28" viewBox="78 492 120 28"><defs><radialGradient id="fg" cx=".38" cy=".3" r=".8"><stop offset="0" stop-color="#fdfdfe"/><stop offset=".42" stop-color="#e0e5ec"/><stop offset=".8" stop-color="#a9b3c0"/><stop offset="1" stop-color="#6f7886"/></radialGradient></defs><g transform="translate(97,505)"><circle r="9.6" fill="#8d929c"/><circle r="8.7" fill="#23252e"/><circle r="7.1" fill="url(#fg)"/><text x="0" y="3.8" text-anchor="middle" font-family="Liberation Sans, sans-serif" font-weight="bold" font-size="10.5" fill="#1b2552" stroke="#1b2552" stroke-width=".5">?</text></g><g transform="translate(123.8,505)"><circle r="9.6" fill="#8d929c"/><circle r="8.7" fill="#23252e"/><circle r="7.1" fill="url(#fg)"/><text x="0" y="3.9" text-anchor="middle" font-family="Liberation Sans, sans-serif" font-weight="bold" font-size="11" fill="#1b2552" stroke="#1b2552" stroke-width=".5">!</text></g><g transform="translate(151.2,505)"><circle r="9.6" fill="#8d929c"/><circle r="8.7" fill="#23252e"/><circle r="7.1" fill="url(#fg)"/><g fill="none" stroke="#1b2552"><circle r="3.3" stroke-width="1.6"/><circle r="4.9" stroke-width="1.6" stroke-dasharray="1.45 1.116"/></g><circle r="1.7" fill="#cfdcf2"/></g><g transform="translate(178.7,505)"><circle r="9.6" fill="#8d929c"/><circle r="8.7" fill="#23252e"/><circle r="7.1" fill="url(#fg)"/><text x="0" y="3.4" text-anchor="middle" font-family="Liberation Sans, sans-serif" font-weight="bold" font-size="9.5" fill="#1b2552" stroke="#1b2552" stroke-width=".5">W</text></g></svg><div class="abs" id="url" style="left:548.3px;top:8px">www.robust.ws</div>
</div>
</div>
</body>
</html>
